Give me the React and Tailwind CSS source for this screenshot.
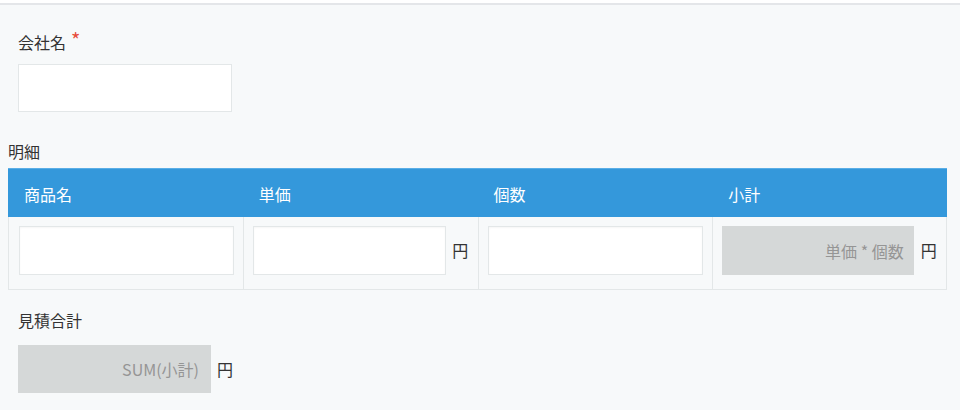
export default function App() {
  const font = { fontFamily: '"Noto Sans CJK JP", "Noto Sans", sans-serif' };
  const inputCls =
    "h-[49px] bg-white border border-[#e3e7e8] shadow-[inset_0_1px_2px_rgba(0,0,0,0.04)]";
  const cols = ["商品名", "単価", "個数", "小計"];
  return (
    <div
      className="w-[960px] h-[410px] bg-[#f7f9fa] text-[#333] text-[16px] overflow-hidden"
      style={font}
    >
      <div className="h-[3px] bg-white" />
      <div className="h-[2px] bg-[#e4e6e9]" />
      <div className="pl-[18px] pt-[26px]">
        <div className="h-[22px] leading-[22px] flex items-center">
          会社名
          <span className="text-[#e74c3c] ml-[5px] text-[20px] leading-[20px] relative top-[-2px]">*</span>
        </div>
        <div className="mt-[11px] w-[214px] h-[48px] bg-white border border-[#e3e7e8]" />
      </div>
      <div className="pl-[8px] pt-[28px]">
        <div className="h-[22px] leading-[22px]">明細</div>
      </div>
      <div className="ml-[8px] mt-[6px] w-[939px]">
        <div className="grid grid-cols-4 h-[49px] bg-[#3498db] text-white border-t border-[#5aaee6]">
          {cols.map((c) => (
            <div key={c} className="flex items-center pl-[16px] pt-[2px]">
              {c}
            </div>
          ))}
        </div>
        <div className="grid grid-cols-4 h-[73px] border border-t-0 border-[#e3e7e8]">
          <div className="pl-[10px] pr-[9px] pt-[9px]">
            <div className={inputCls} />
          </div>
          <div className="border-l border-[#e3e7e8] pl-[9px] pt-[9px] flex items-start">
            <div className={`${inputCls} w-[193px]`} />
            <span className="ml-[6px] leading-[49px]">円</span>
          </div>
          <div className="border-l border-[#e3e7e8] pl-[9px] pr-[9px] pt-[9px]">
            <div className={inputCls} />
          </div>
          <div className="border-l border-[#e3e7e8] pl-[9px] pt-[9px] flex items-start">
            <div className="h-[49px] w-[192px] bg-[#d5d8d8] flex items-center justify-end pr-[10px] text-[#959595]">
              単価 * 個数
            </div>
            <span className="ml-[7px] leading-[49px]">円</span>
          </div>
        </div>
      </div>
      <div className="pl-[18px] pt-[19px]">
        <div className="h-[22px] leading-[22px]">見積合計</div>
        <div className="mt-[14px] flex items-center">
          <div className="h-[48px] w-[193px] bg-[#d5d8d8] flex items-center justify-end pr-[12px] text-[#959595]">
            SUM(小計)
          </div>
          <span className="ml-[6px]">円</span>
        </div>
      </div>
    </div>
  );
}
